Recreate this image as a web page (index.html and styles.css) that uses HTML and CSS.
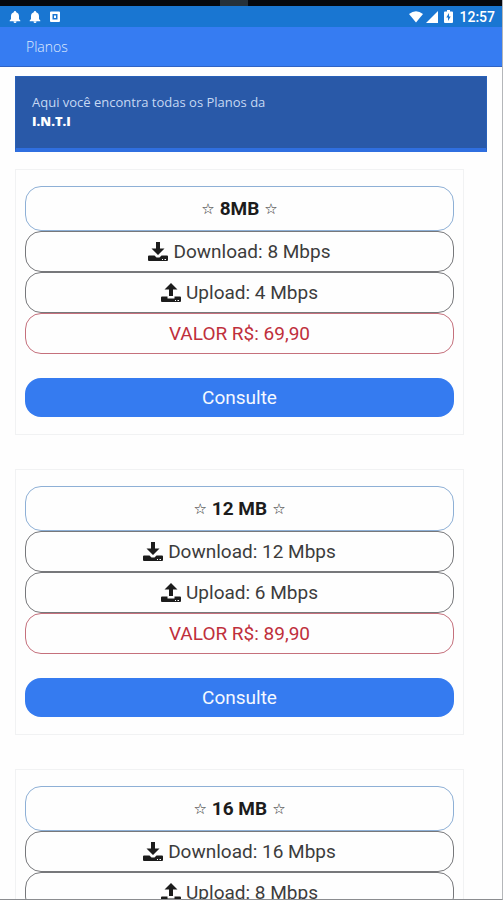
FILE: index.html
```html
<!DOCTYPE html>
<html lang="pt-BR">
<head>
<meta charset="utf-8">
<meta name="viewport" content="width=device-width, initial-scale=1">
<title>Planos</title>
<link rel="stylesheet" href="styles.css">
</head>
<body>
<svg class="sprite" aria-hidden="true">
  <symbol id="bell" viewBox="0 0 12 12"><path d="M6 0C6.800 0 7.200 .6 7.200 1.300C9.300 2 10 3.500 10 5.300V8L11.300 9.400V10.200H.7V9.400L2 8V5.300C2 3.500 2.700 2 4.800 1.300C4.800 .6 5.200 0 6 0ZM4.500 10.500H7.500A1.500 1.500 0 0 1 4.500 10.500Z"/></symbol>
  <symbol id="download" viewBox="0 0 20 20"><path d="M8 0H12V6.500H16.500L10 13L3.500 6.500H8ZM1 13.500H6.500L8.500 15.500H11.500L13.500 13.500H19Q20 13.500 20 14.500V18Q20 19 19 19H1Q0 19 0 18V14.500Q0 13.500 1 13.500ZM14 17V18H15V17ZM16.500 17V18H18V17Z" fill-rule="evenodd"/></symbol>
  <symbol id="upload" viewBox="0 0 20 20"><path d="M10 0L16.500 6.500H12V13H8V6.500H3.500ZM1 13.500H6.500V15.500H13.500V13.500H19Q20 13.500 20 14.500V18Q20 19 19 19H1Q0 19 0 18V14.500Q0 13.500 1 13.500ZM14 17V18H15V17ZM16.500 17V18H18V17Z" fill-rule="evenodd"/></symbol>
</svg>
<div class="app">
  <div class="bezel"><span class="notch"></span></div>
  <div class="status">
    <div class="notices">
      <svg class="notice"><use href="#bell"/></svg>
      <svg class="notice"><use href="#bell"/></svg>
      <svg class="notice" viewBox="0 0 12 12"><path fill-rule="evenodd" d="M2 0.500H10Q11 .5 11 1.500V10Q11 11 10 11H2Q1 11 1 10V1.500Q1 .5 2 .5ZM3.500 3V8.500H8.500V3Z"/><path d="M5 4.500H7V7H5Z"/></svg>
    </div>
    <div class="system">
      <svg class="wifi" viewBox="0 0 14 12"><path d="M0 3Q7-2.500 14 3L7 11.500Z"/></svg>
      <svg class="signal" viewBox="0 0 12 12"><path d="M12 0V12H0Z"/></svg>
      <svg class="battery" viewBox="0 0 9 13"><path fill-rule="evenodd" d="M3 0H6V1.500H8Q9 1.500 9 2.500V12Q9 13 8 13H1Q0 13 0 12V2.500Q0 1.500 1 1.500H3ZM5 3L2.300 7.500H4V11L6.700 6.500H5Z"/></svg>
      <span>12:57</span>
    </div>
  </div>
  <header class="bar"><h1 class="title">Planos</h1></header>
  <main class="content">
    <section class="banner">Aqui você encontra todas os Planos da<br><strong>I.N.T.I</strong></section>
    <article class="card">
      <h2 class="pill name"><span class="star">☆</span> 8MB <span class="star">☆</span></h2>
      <p class="pill"><svg class="icon"><use href="#download"/></svg>Download: 8 Mbps</p>
      <p class="pill"><svg class="icon"><use href="#upload"/></svg>Upload: 4 Mbps</p>
      <p class="pill price">VALOR R$: 69,90</p>
      <button class="ask" type="button">Consulte</button>
    </article>
    <article class="card">
      <h2 class="pill name"><span class="star">☆</span> 12 MB <span class="star">☆</span></h2>
      <p class="pill"><svg class="icon"><use href="#download"/></svg>Download: 12 Mbps</p>
      <p class="pill"><svg class="icon"><use href="#upload"/></svg>Upload: 6 Mbps</p>
      <p class="pill price">VALOR R$: 89,90</p>
      <button class="ask" type="button">Consulte</button>
    </article>
    <article class="card">
      <h2 class="pill name"><span class="star">☆</span> 16 MB <span class="star">☆</span></h2>
      <p class="pill"><svg class="icon"><use href="#download"/></svg>Download: 16 Mbps</p>
      <p class="pill"><svg class="icon"><use href="#upload"/></svg>Upload: 8 Mbps</p>
    </article>
  </main>
</div>
</body>
</html>
```
FILE: styles.css
```css
* { box-sizing: border-box; }

body {
  margin: 0;
  background: #fefefe;
  color: #1c1c1c;
  font-family: Roboto, "Liberation Sans", sans-serif;
}

.sprite { display: none; }

svg { fill: currentColor; }

.app {
  display: flex;
  flex-direction: column;
  height: 100vh;
  overflow: hidden;
  border-right: 1px solid #b4b6b9;
  border-bottom: 1px solid #8b8d90;
}

.bezel {
  flex: none;
  display: flex;
  justify-content: center;
  height: 6px;
  background: #05080f;
}

.notch {
  width: 28px;
  margin-right: 34px;
  background: #26313a;
}

.status {
  flex: none;
  display: flex;
  justify-content: space-between;
  align-items: center;
  height: 21px;
  padding: 0 7px 0 9px;
  background: #1976d2;
  color: #fff;
  font-size: 14px;
  font-weight: 500;
}

.notices { display: flex; gap: 8px; }

.notice { width: 12px; height: 12px; }

.system { display: flex; align-items: center; gap: 3px; }

.wifi { width: 14px; height: 12px; }

.signal { width: 12px; height: 12px; }

.battery { width: 9px; height: 13px; margin: 0 3px; }

.bar {
  flex: none;
  display: flex;
  align-items: center;
  height: 40px;
  padding: 0 26px;
  background: #367cf2;
  border-bottom: 1px solid #2f63c4;
  color: #dfeafd;
}

.title {
  margin: 0;
  font: 300 14px/20px "Open Sans", sans-serif;
}

.content {
  flex: 1;
  min-height: 0;
  padding: 9px 15px 0;
}

.banner {
  margin-bottom: 17px;
  padding: 16px 16px 17px;
  border: 1px solid #2860b8;
  border-bottom: 4px solid #2f6fe0;
  background: #2959a8;
  color: #c6d8f3;
  font: 400 13px/19px "Open Sans", sans-serif;
}

.banner strong { color: #fff; font-weight: 800; }

.card {
  margin: 0 23px 34px 0;
  padding: 16px 9px 17px;
  border: 1px solid #f1f2f3;
}

.pill {
  display: flex;
  align-items: center;
  justify-content: center;
  gap: 5px;
  height: 41px;
  margin: 0;
  border: 1px solid #77787b;
  border-radius: 16px;
  color: #3c3c3c;
  font-size: 19px;
  font-weight: 400;
}

.name {
  height: 45px;
  border-color: #8eb0d6;
  color: #1c1c1c;
  font-weight: 700;
}

.star {
  font-family: "DejaVu Sans", sans-serif;
  font-size: 15px;
  font-weight: 400;
}

.icon { width: 20px; height: 20px; color: #1c1c1c; }

.price {
  border-color: #c5707c;
  color: #bf2f3c;
}

.ask {
  display: block;
  width: 100%;
  height: 39px;
  margin-top: 24px;
  padding: 0;
  border: 0;
  border-radius: 16px;
  background: #357bf0;
  color: #f4f8ff;
  font: 400 19px Roboto, "Liberation Sans", sans-serif;
}
```
